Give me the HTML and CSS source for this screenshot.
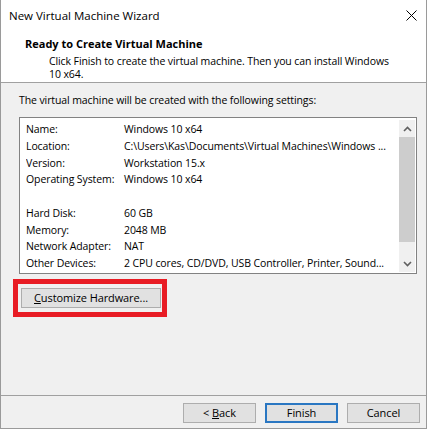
FILE: index.html
```html
<!DOCTYPE html>
<html lang="en">
  <head>
    <meta charset="UTF-8" />
    <title>New Virtual Machine Wizard</title>
    <link rel="stylesheet" href="styles.css">
  </head>
  <body>
    <div class="window">
      <div class="titlebar">
        <span class="title">New Virtual Machine Wizard</span>
        <svg class="close" width="11" height="11" viewBox="0 0 11 11">
          <path d="M0.5 0.5 L10.5 10.5 M10.5 0.5 L0.5 10.5" stroke="#000" stroke-width="1" fill="none" />
        </svg>
      </div>

      <div class="header">
        <h1>Ready to Create Virtual Machine</h1>
        <p class="sub">Click Finish to create the virtual machine. Then you can install Windows<br />10 x64.</p>
      </div>

      <div class="content">
        <p class="intro">The virtual machine will be created with the following settings:</p>

        <div class="listbox">
          <div class="rows">
            <div class="row"><span>Name:</span><span>Windows 10 x64</span></div>
            <div class="row"><span>Location:</span><span>C:\Users\Kas\Documents\Virtual Machines\Windows ...</span></div>
            <div class="row"><span>Version:</span><span>Workstation 15.x</span></div>
            <div class="row"><span>Operating System:</span><span>Windows 10 x64</span></div>
            <div class="row"><span>&nbsp;</span><span>&nbsp;</span></div>
            <div class="row"><span>Hard Disk:</span><span>60 GB</span></div>
            <div class="row"><span>Memory:</span><span>2048 MB</span></div>
            <div class="row"><span>Network Adapter:</span><span>NAT</span></div>
            <div class="row"><span>Other Devices:</span><span>2 CPU cores, CD/DVD, USB Controller, Printer, Sound...</span></div>
          </div>
          <div class="scrollbar">
            <div class="arrow">
              <svg width="9" height="6" viewBox="0 0 9 6"><path d="M1 5 L4.5 1.5 L8 5" stroke="#606060" stroke-width="1.6" fill="none" /></svg>
            </div>
            <div class="thumb"></div>
            <div class="track"></div>
            <div class="arrow">
              <svg width="9" height="6" viewBox="0 0 9 6"><path d="M1 1 L4.5 4.5 L8 1" stroke="#606060" stroke-width="1.6" fill="none" /></svg>
            </div>
          </div>
        </div>

        <div class="highlight">
          <button class="btn wide"><u>C</u>ustomize Hardware...</button>
        </div>
      </div>

      <div class="footer">
        <button class="btn">&lt; <u>B</u>ack</button>
        <button class="btn default">Finish</button>
        <button class="btn">Cancel</button>
      </div>
    </div>
  </body>
</html>
```

FILE: styles.css
```css
body {
  margin: 0;
  background: #fff;
  font-family: "Open Sans", "Noto Sans", sans-serif;
  font-size: 10.5px;
  letter-spacing: -0.1px;
  color: #000;
}
.window {
  width: 427px;
  height: 429px;
  box-sizing: border-box;
  border: 1px solid #9a9a9a;
  border-top: none;
  background: #f0f0f0;
  display: flex;
  flex-direction: column;
}
.titlebar {
  height: 30px;
  background: #fff;
  display: flex;
  align-items: center;
  justify-content: space-between;
  padding: 0 9px 0 8px;
  font-size: 11.5px;
  letter-spacing: 0;
}
.header {
  height: 53px;
  box-sizing: border-box;
  background: #fff;
  border-bottom: 1px solid #a0a0a0;
  padding-top: 7px;
}
.header h1 {
  margin: 0;
  padding-left: 24px;
  font-size: 11px;
  font-weight: bold;
  letter-spacing: 0;
  line-height: 14px;
}
.header .sub {
  margin: 4px 0 0;
  padding-left: 48px;
  line-height: 13px;
  white-space: nowrap;
}
.content {
  flex: 1;
  padding: 10px 0 0 18px;
}
.intro {
  margin: 0 0 10px;
  line-height: 14px;
}
.listbox {
  width: 398px;
  height: 157px;
  box-sizing: border-box;
  border: 1px solid #828282;
  background: #fff;
  display: flex;
}
.rows {
  flex: 1;
  min-width: 0;
  padding: 3px 0 0 6px;
}
.row {
  display: grid;
  grid-template-columns: 98px 1fr;
  line-height: 16.75px;
  white-space: nowrap;
  overflow: hidden;
}
.scrollbar {
  width: 16px;
  margin: 2px 1px 1px 0;
  background: #f0f0f0;
  display: flex;
  flex-direction: column;
}
.arrow {
  height: 17px;
  display: flex;
  align-items: center;
  justify-content: center;
}
.thumb {
  height: 105px;
  background: #cdcdcd;
}
.track {
  flex: 1;
}
.highlight {
  width: fit-content;
  margin: 5px 0 0 -6px;
  border: 5px solid #e81c24;
  padding: 4px 1px 4px 3px;
}
.btn {
  width: 73px;
  height: 20px;
  padding: 0;
  border: 1px solid #adadad;
  background: #e1e1e1;
  font-family: inherit;
  font-size: 11px;
  letter-spacing: -0.1px;
  color: #000;
  line-height: 16px;
}
.btn.wide {
  width: 140px;
  display: block;
}
.btn.default {
  border: 2px solid #2a77c2;
}
.footer {
  height: 33px;
  box-sizing: border-box;
  border-top: 1px solid #a0a0a0;
  display: flex;
  justify-content: flex-end;
  gap: 9px;
  padding: 7px 6px 0 0;
}
```
